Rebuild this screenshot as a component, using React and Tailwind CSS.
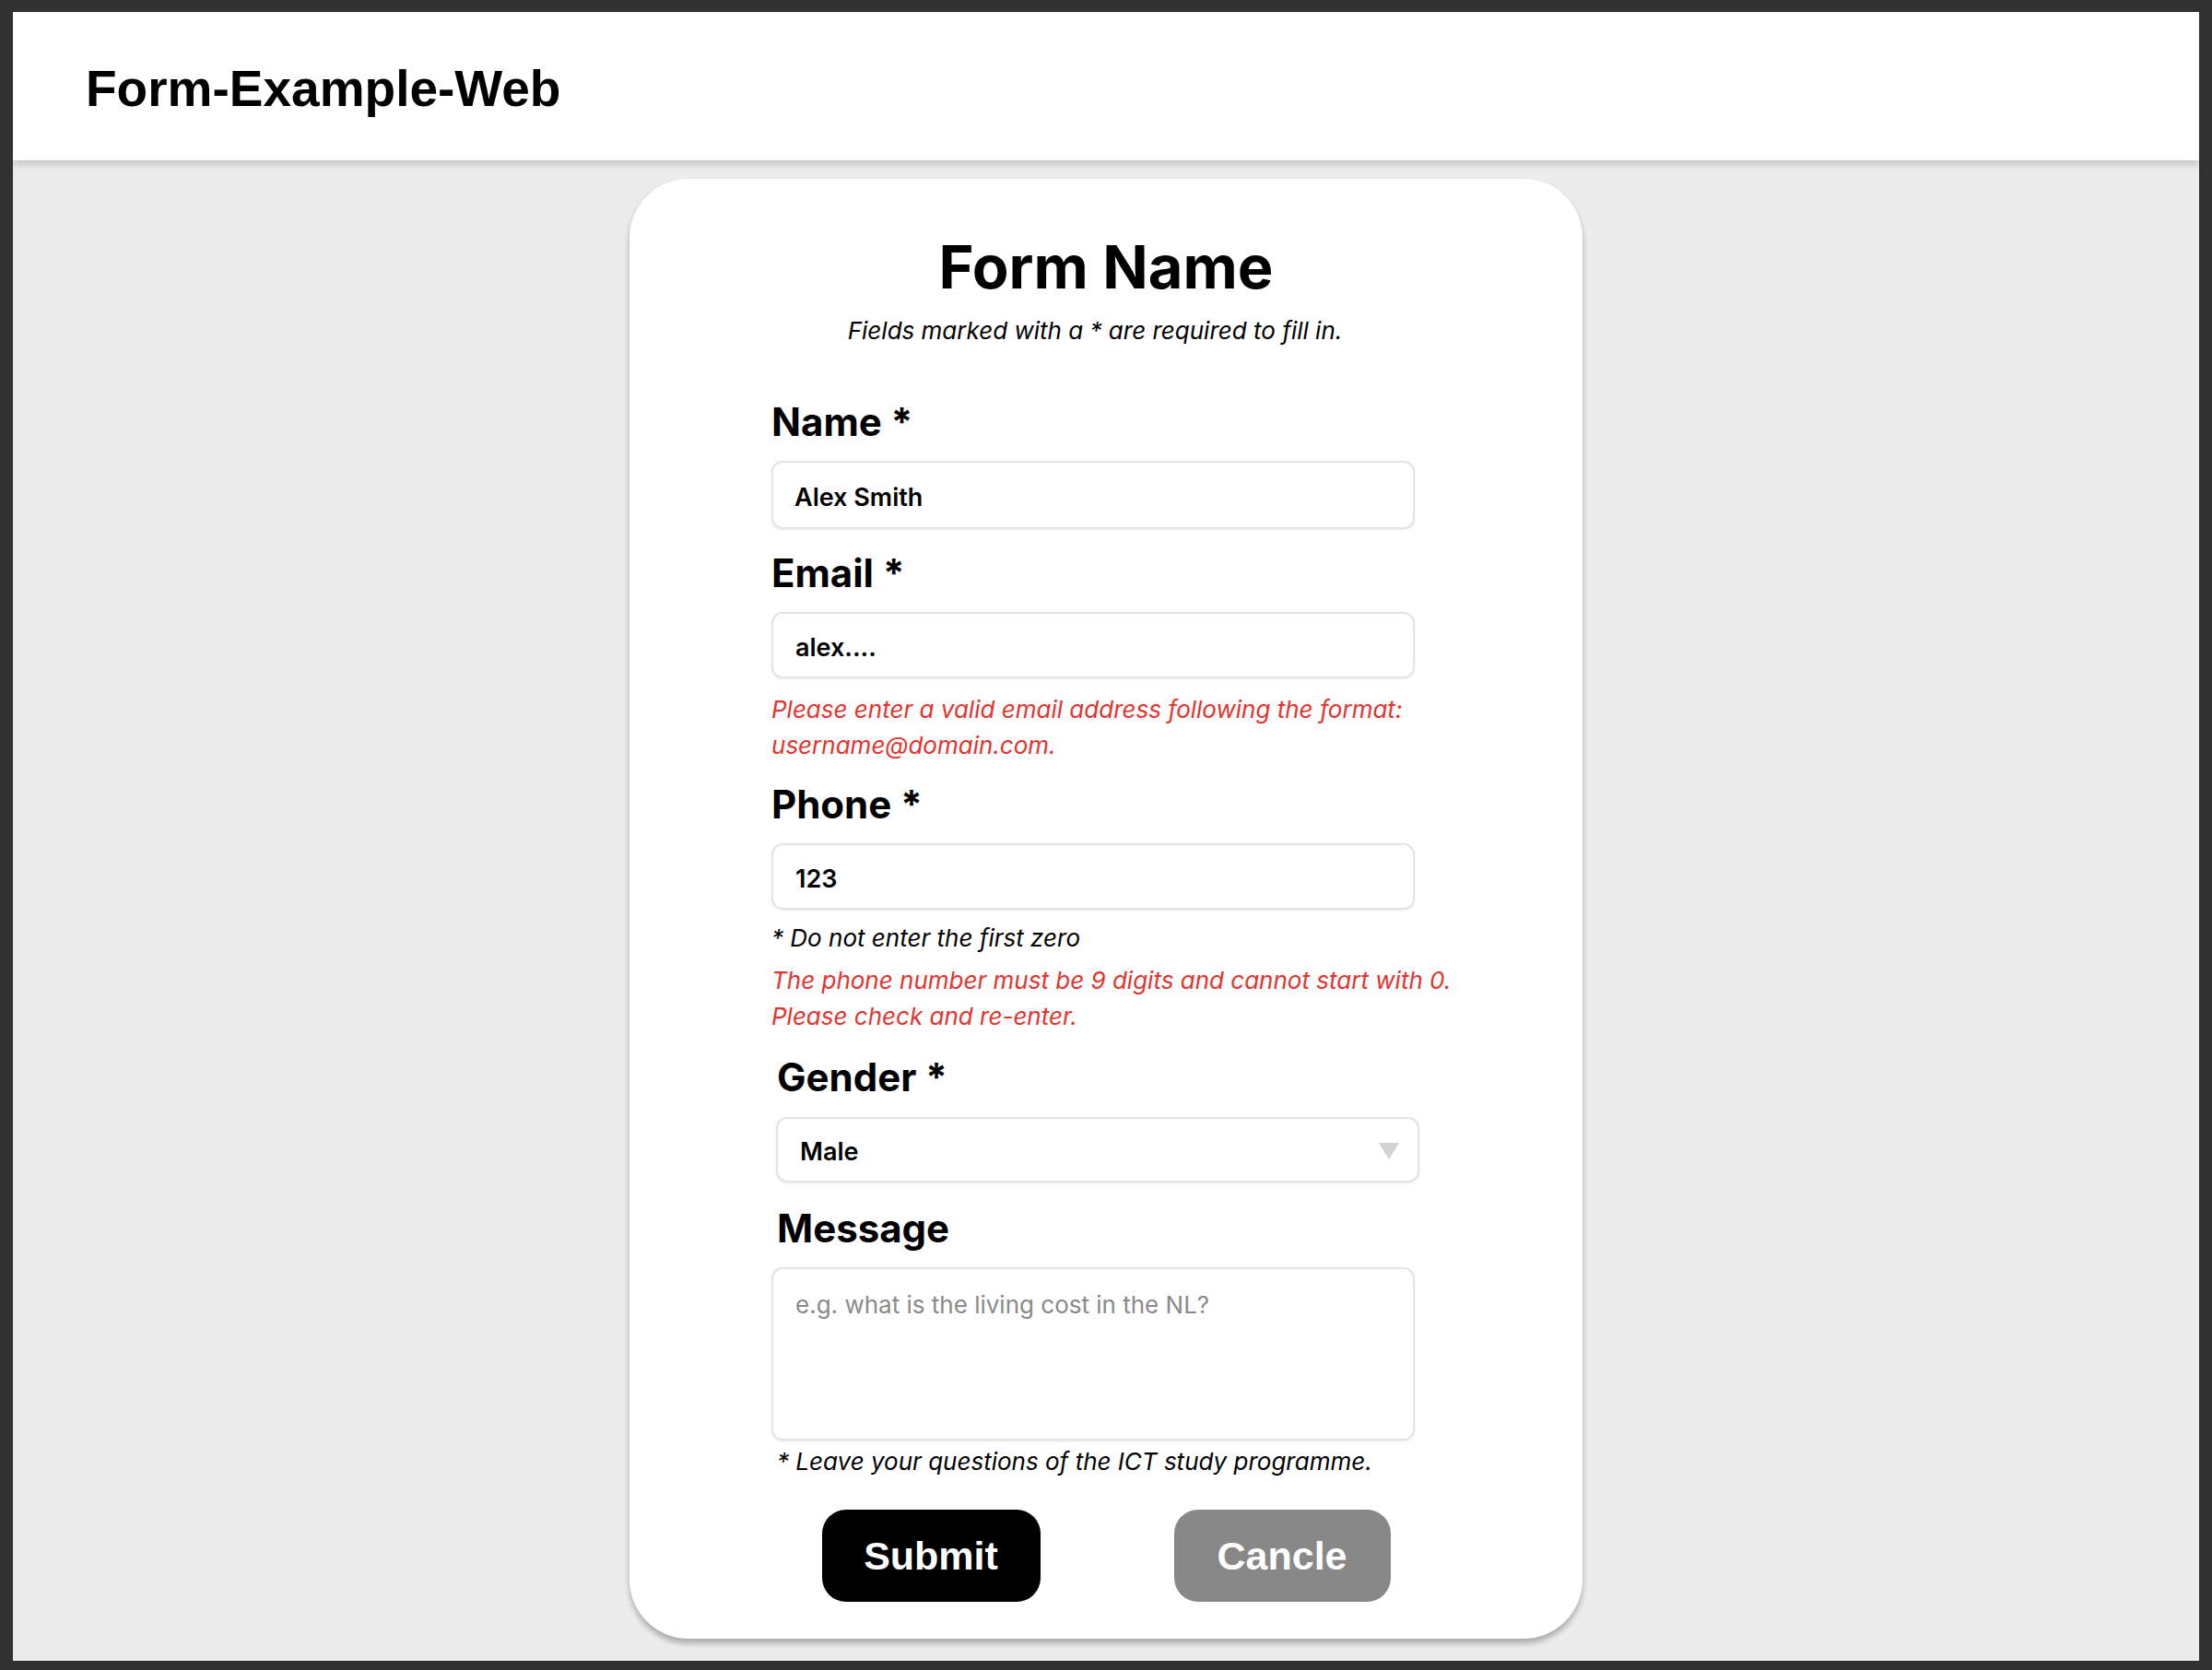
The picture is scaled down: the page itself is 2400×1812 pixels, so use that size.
import React from "react";

const inter = "font-['Inter','Noto_Sans',sans-serif]";
const fieldBox =
  "block w-full rounded-[12px] border-2 border-[#e4e4e4] bg-white shadow-[0_1px_3px_rgba(0,0,0,0.08)] outline-none";

function Label({ children, className = "" }) {
  return (
    <div className={`text-[42px] leading-[48px] font-bold text-black ${className}`}>
      {children}
    </div>
  );
}

export default function App() {
  return (
    <div className="h-[1812px] w-full bg-[#313131] pt-[13px] px-[14px] pb-[10px] flex flex-col">
      <div className="flex-1 flex flex-col bg-[#ececec] overflow-hidden">
        <header className="relative z-10 h-[161px] shrink-0 bg-white flex items-center pl-[79px] pt-[5px] shadow-[0_5px_8px_rgba(0,0,0,0.16)]">
          <h1 className="font-['Liberation_Sans',Arial,sans-serif] text-[55px] font-bold text-black leading-normal">
            Form-Example-Web
          </h1>
        </header>

        <main className="flex-1 pt-[20px]">
          <div
            className={`${inter} mx-auto w-[1034px] rounded-[64px] bg-white pt-[64px] pb-[40px] shadow-[0_5px_6px_rgba(0,0,0,0.28)]`}
          >
            <h2 className="text-center text-[65px] leading-[64px] font-bold text-black">Form Name</h2>
            <p className="mt-[19px] text-center text-[26px] leading-[36px] italic text-black pr-[24px]">
              Fields marked with a * are required to fill in.
            </p>

            <div className="ml-[154px] w-[698px]">
              <Label className="mt-[57px]">Name *</Label>
              <input
                readOnly
                defaultValue="Alex Smith"
                className={`${fieldBox} mt-[18px] h-[74px] pl-[23px] pt-[5px] text-[27px] font-semibold text-black`}
              />

              <Label className="mt-[24px]">Email *</Label>
              <input
                readOnly
                defaultValue="alex...."
                className={`${fieldBox} mt-[18px] h-[72px] pl-[24px] pt-[5px] text-[27px] font-semibold text-black`}
              />
              <p className="mt-[14px] text-[26px] leading-[39px] italic text-[#e3342f] whitespace-nowrap">
                Please enter a valid email address following the format:
                <br />
                username@domain.com.
              </p>

              <Label className="mt-[21px]">Phone *</Label>
              <input
                readOnly
                defaultValue="123"
                className={`${fieldBox} mt-[18px] h-[72px] pl-[24px] pt-[5px] text-[27px] font-semibold text-black`}
              />
              <p className="mt-[11px] text-[26px] leading-[39px] italic text-black">
                * Do not enter the first zero
              </p>
              <p className="mt-[7px] text-[26px] leading-[39px] italic text-[#e3342f] whitespace-nowrap">
                The phone number must be 9 digits and cannot start with 0.
                <br />
                Please check and re-enter.
              </p>

              <Label className="mt-[23px] ml-[6px]">Gender *</Label>
              <div
                className={`${fieldBox} ml-[5px] mt-[19px] h-[71px] pl-[24px] pr-[20px] flex items-center justify-between`}
              >
                <span className="mt-[5px] text-[27px] font-semibold text-black">Male</span>
                <svg width="22" height="18" viewBox="0 0 22 18" className="mt-[2px]">
                  <polygon points="0,0 22,0 11,18" fill="#d2d2d2" />
                </svg>
              </div>

              <Label className="mt-[26px] ml-[6px]">Message</Label>
              <textarea
                readOnly
                placeholder="e.g. what is the living cost in the NL?"
                className={`${fieldBox} mt-[18px] h-[188px] resize-none pl-[24px] pt-[21px] text-[26px] leading-[36px] text-black placeholder:text-[#8a8a8a]`}
              />
              <p className="mt-[3px] ml-[6px] text-[26px] leading-[39px] italic text-black">
                * Leave your questions of the ICT study programme.
              </p>
            </div>

            <div className="mt-[33px] flex justify-center gap-[145px] font-['Liberation_Sans',Arial,sans-serif]">
              <button className="h-[100px] w-[237px] rounded-[26px] bg-black text-[43px] font-bold text-white">
                Submit
              </button>
              <button className="h-[100px] w-[235px] rounded-[26px] bg-[#888888] text-[43px] font-bold text-white">
                Cancle
              </button>
            </div>
          </div>
        </main>
      </div>
    </div>
  );
}
